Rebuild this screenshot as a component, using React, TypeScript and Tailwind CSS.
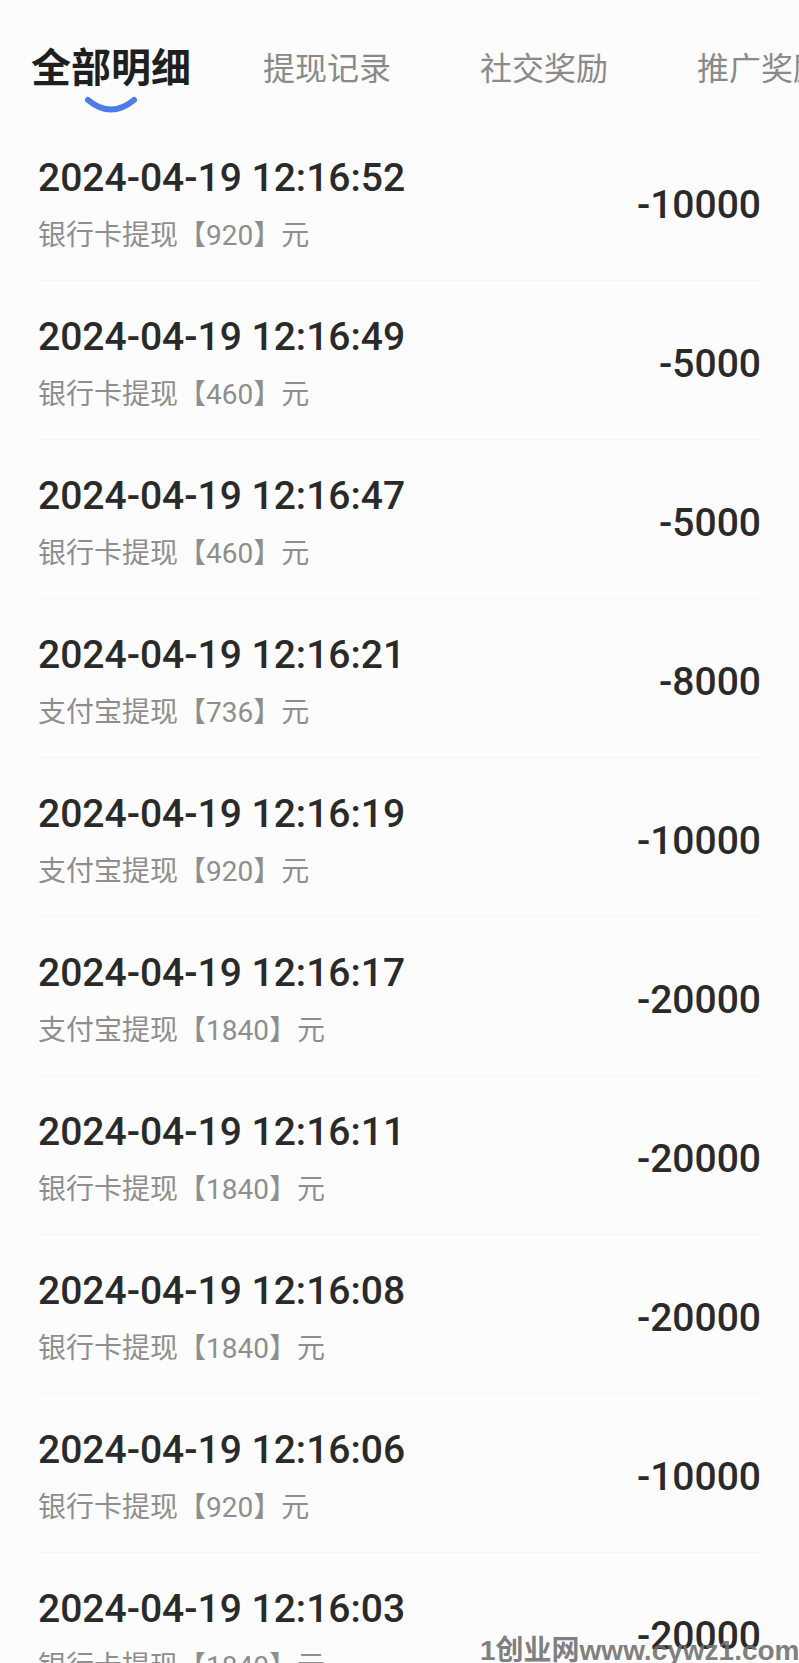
import React from 'react';

interface Record {
  time: string;
  channel: string;
  cash: string;
  points: string;
}

const records: Record[] = [
  { time: '2024-04-19 12:16:52', channel: '银行卡提现', cash: '920', points: '-10000' },
  { time: '2024-04-19 12:16:49', channel: '银行卡提现', cash: '460', points: '-5000' },
  { time: '2024-04-19 12:16:47', channel: '银行卡提现', cash: '460', points: '-5000' },
  { time: '2024-04-19 12:16:21', channel: '支付宝提现', cash: '736', points: '-8000' },
  { time: '2024-04-19 12:16:19', channel: '支付宝提现', cash: '920', points: '-10000' },
  { time: '2024-04-19 12:16:17', channel: '支付宝提现', cash: '1840', points: '-20000' },
  { time: '2024-04-19 12:16:11', channel: '银行卡提现', cash: '1840', points: '-20000' },
  { time: '2024-04-19 12:16:08', channel: '银行卡提现', cash: '1840', points: '-20000' },
  { time: '2024-04-19 12:16:06', channel: '银行卡提现', cash: '920', points: '-10000' },
  { time: '2024-04-19 12:16:03', channel: '银行卡提现', cash: '1840', points: '-20000' },
];

const tabs = ['提现记录', '社交奖励', '推广奖励'];

export default function App() {
  return (
    <div
      className="relative h-[1663px] w-[799px] overflow-hidden bg-[#fcfcfc]"
      style={{ fontFamily: 'Roboto, "Noto Sans CJK SC", sans-serif' }}
    >
      {/* Tabs */}
      <div className="flex h-[122px] items-start whitespace-nowrap pl-[31px] pt-[45px]">
        <div className="flex flex-col items-center">
          <span className="text-[40px] font-bold leading-[48px] text-[#1f1f1f]">全部明细</span>
          <svg width="54" height="18" viewBox="0 0 54 18" className="mt-[2px]">
            <path d="M4 5 Q27 24 50 5" fill="none" stroke="#4f7be9" strokeWidth="6" strokeLinecap="round" />
          </svg>
        </div>
        {tabs.map((t, i) => (
          <span
            key={t}
            className={`text-[32px] leading-[48px] text-[#8a8a8a] ${i === 0 ? 'ml-[72px]' : 'ml-[89px]'}`}
          >
            {t}
          </span>
        ))}
      </div>

      {/* Records */}
      <div>
        {records.map(r => (
          <div key={r.time} className="mx-[38px] flex items-center justify-between border-b border-[#f4f4f4] pb-[26px] pt-[34px]">
            <div>
              <div className="text-[39px] font-medium leading-[44px] text-[#2a2a2a]">{r.time}</div>
              <div className="mt-[18px] text-[28px] leading-[36px] text-[#8e8e8e]">
                {r.channel}【{r.cash}】元
              </div>
            </div>
            <div className="text-[39px] font-medium leading-[44px] text-[#2a2a2a]">{r.points}</div>
          </div>
        ))}
      </div>

      {/* Watermark */}
      <div
        className="absolute bottom-[-5px] left-[480px] whitespace-nowrap text-[28px] font-bold leading-[34px] text-[#6f6f6f]/90"
        style={{ fontFamily: '"Liberation Sans", "Noto Sans CJK SC", sans-serif' }}
      >
        1创业网www.cywz1.com
      </div>
    </div>
  );
}
